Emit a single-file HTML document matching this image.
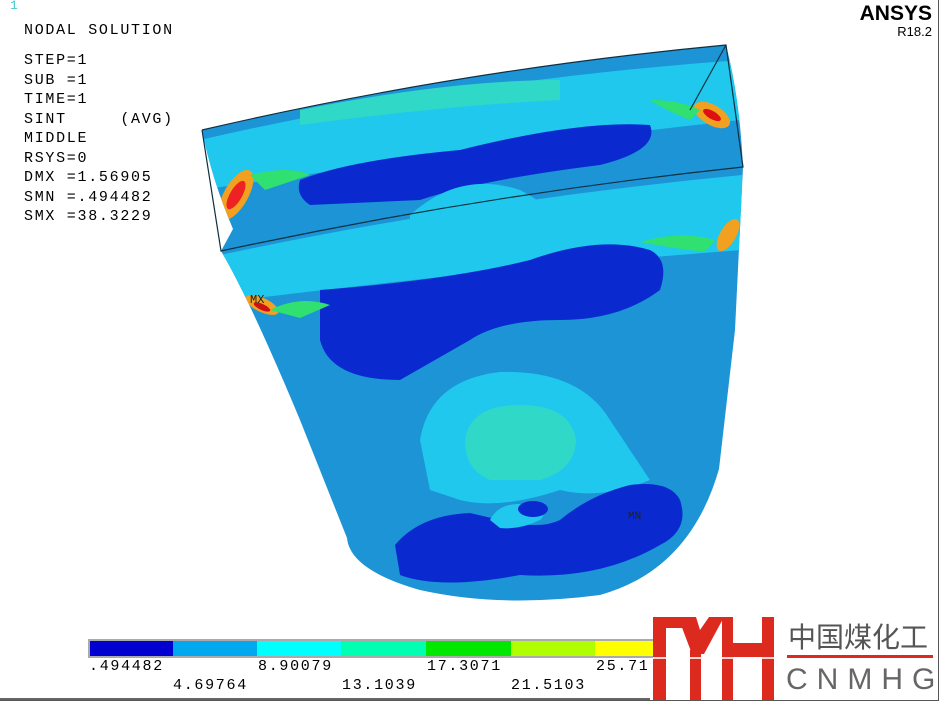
<!DOCTYPE html>
<html><head><meta charset="utf-8"><style>
html,body{margin:0;padding:0;background:#fff;}
#w{position:relative;width:940px;height:705px;overflow:hidden;background:#fff;}
.t{position:absolute;font-family:"Liberation Mono","DejaVu Sans Mono",monospace;font-size:15px;letter-spacing:1.7px;color:#000;white-space:pre;line-height:19.5px;}
</style></head><body><div id="w">
<div style="position:absolute;left:0;top:0;width:938px;height:700px;border:1px solid #555;border-top:none;border-left:none;"></div>
<div class="t" style="left:10px;top:-4px;color:#4cc;font-size:13px;">1</div>
<div class="t" style="left:24px;top:21px;">NODAL SOLUTION</div>
<div class="t" style="left:24px;top:51px;">STEP=1
SUB =1
TIME=1
SINT     (AVG)
MIDDLE
RSYS=0
DMX =1.56905
SMN =.494482
SMX =38.3229</div>
<div style="position:absolute;right:8px;top:2px;font-family:'Liberation Sans',sans-serif;font-weight:bold;font-size:21px;">ANSYS</div>
<div style="position:absolute;right:8px;top:24px;font-family:'Liberation Sans',sans-serif;font-size:13px;">R18.2</div>
<svg width="940" height="705" style="position:absolute;left:0;top:0">
<defs><clipPath id="c"><path d="M202,130 Q460,70 726,45 Q740,100 743,167 L735,330 L719,469 Q690,570 600,595 Q500,608 420,590 Q350,570 347,538 L300,420 Q250,300 221,251 L233,229 Q212,180 202,130Z"/></clipPath></defs>
<g clip-path="url(#c)">
<rect x="190" y="40" width="560" height="570" fill="#1c94d6"/>
<path d="M200,140 Q460,80 740,60 L740,120 Q470,150 200,190Z" fill="#20c8ee"/>
<path d="M300,110 Q450,80 560,80 L560,100 Q450,105 300,125Z" fill="#30d8c8"/>
<path d="M300,180 Q350,160 460,150 Q580,120 650,125 Q660,150 600,165 Q480,180 420,200 L310,205 Q295,195 300,180Z" fill="#0a2ad0"/>
<path d="M410,215 Q460,170 520,190 Q560,210 560,240 L410,240Z" fill="#20c8ee"/>
<path d="M450,225 Q500,200 540,225 L540,240 L450,240Z" fill="#30d8c8"/>
<path d="M220,255 Q480,200 742,175 L742,250 Q480,270 240,300Z" fill="#20c8ee"/>
<path d="M320,290 Q450,280 530,260 Q600,235 650,250 Q670,260 660,290 Q620,320 560,320 Q500,320 470,340 L400,380 Q330,380 320,340Z" fill="#0a2ad0"/>
<path d="M420,440 Q430,380 500,372 Q580,370 610,420 L650,480 Q600,500 560,490 Q500,510 460,500 L430,490Z" fill="#20c8ee"/>
<path d="M465,440 Q470,405 520,405 Q570,405 576,440 Q575,470 540,480 L490,480 Q465,470 465,440Z" fill="#30d8c8"/>
<path d="M395,545 Q420,515 470,513 L500,520 Q540,530 560,520 Q590,495 630,485 Q670,480 680,500 Q690,530 660,545 Q600,580 520,575 Q440,590 400,575Z" fill="#0a2ad0"/>
<path d="M490,520 Q500,500 530,505 Q550,512 540,520 Q520,530 500,528Z" fill="#20c8ee"/>
<ellipse cx="533" cy="509" rx="15" ry="8" fill="#0a2ad0"/>
<ellipse cx="236" cy="195" rx="12" ry="28" fill="#f2a020" transform="rotate(30 236 195)"/>
<ellipse cx="236" cy="195" rx="6" ry="16" fill="#e22" transform="rotate(30 236 195)"/>
<ellipse cx="712" cy="115" rx="20" ry="10" fill="#f2a020" transform="rotate(30 712 115)"/>
<ellipse cx="712" cy="115" rx="10" ry="4" fill="#d11" transform="rotate(30 712 115)"/>
<ellipse cx="262" cy="305" rx="18" ry="7" fill="#f2a020" transform="rotate(25 262 305)"/>
<ellipse cx="262" cy="307" rx="9" ry="3" fill="#c11" transform="rotate(25 262 307)"/>
<ellipse cx="728" cy="235" rx="8" ry="18" fill="#f2a020" transform="rotate(30 728 235)"/>
<path d="M640,242 Q680,230 715,240 L705,252 Q670,248 640,242Z" fill="#30e070"/>
<path d="M270,310 Q300,295 330,305 L300,318Z" fill="#30e070"/>
<path d="M250,175 Q290,165 310,175 L265,190Z" fill="#30e070"/>
<path d="M650,100 Q680,100 700,110 L690,120 Q665,110 650,100Z" fill="#30e070"/>
</g>
<path d="M202,130 Q460,70 726,45 L743,167 Q480,195 221,251 L202,130 M726,45 L690,110" fill="none" stroke="#103040" stroke-width="1.2"/>
<text x="250" y="303" font-family="Liberation Mono,monospace" font-size="12" fill="#222">MX</text>
<text x="628" y="519" font-family="Liberation Mono,monospace" font-size="11" fill="#222">MN</text>
<rect x="88" y="639" width="570" height="19" fill="#aaa"/>
<rect x="90" y="641" width="83" height="15" fill="#0000d0"/>
<rect x="173" y="641" width="84" height="15" fill="#00a8f0"/>
<rect x="257" y="641" width="84" height="15" fill="#00ffff"/>
<rect x="341" y="641" width="85" height="15" fill="#00ffb0"/>
<rect x="426" y="641" width="85" height="15" fill="#00e800"/>
<rect x="511" y="641" width="84" height="15" fill="#b0ff00"/>
<rect x="595" y="641" width="63" height="15" fill="#ffff00"/>
<line x1="0" y1="699" x2="650" y2="699" stroke="#333" stroke-width="1.5"/>
<g fill="#dd2a1f">
<rect x="653" y="617" width="13" height="83"/>
<rect x="653" y="617" width="40" height="11"/>
<polygon points="678,617 696,617 700,630 709,617 724,617 704,654 692,654"/>
<rect x="690" y="650" width="11" height="50"/>
<rect x="722" y="617" width="11" height="83"/>
<rect x="762" y="617" width="12" height="83"/>
<rect x="722" y="643" width="52" height="14"/>
<rect x="787" y="655" width="146" height="3"/>
</g>
<rect x="653" y="657" width="122" height="2" fill="#fff" opacity="0.8"/>
</svg>
<div class="t" style="left:89px;top:657px;">.494482</div>
<div class="t" style="left:258px;top:657px;">8.90079</div>
<div class="t" style="left:427px;top:657px;">17.3071</div>
<div class="t" style="left:596px;top:657px;">25.71</div>
<div class="t" style="left:173px;top:676px;">4.69764</div>
<div class="t" style="left:342px;top:676px;">13.1039</div>
<div class="t" style="left:511px;top:676px;">21.5103</div>
<div style="position:absolute;left:788px;top:619px;font-family:'Noto Sans CJK SC',sans-serif;font-size:28px;color:#555;line-height:34px;">中国煤化工</div>
<div style="position:absolute;left:786px;top:663px;font-family:'Liberation Sans',sans-serif;font-size:30px;color:#666;letter-spacing:9px;line-height:34px;">CNMHG</div>
</div></body></html>
